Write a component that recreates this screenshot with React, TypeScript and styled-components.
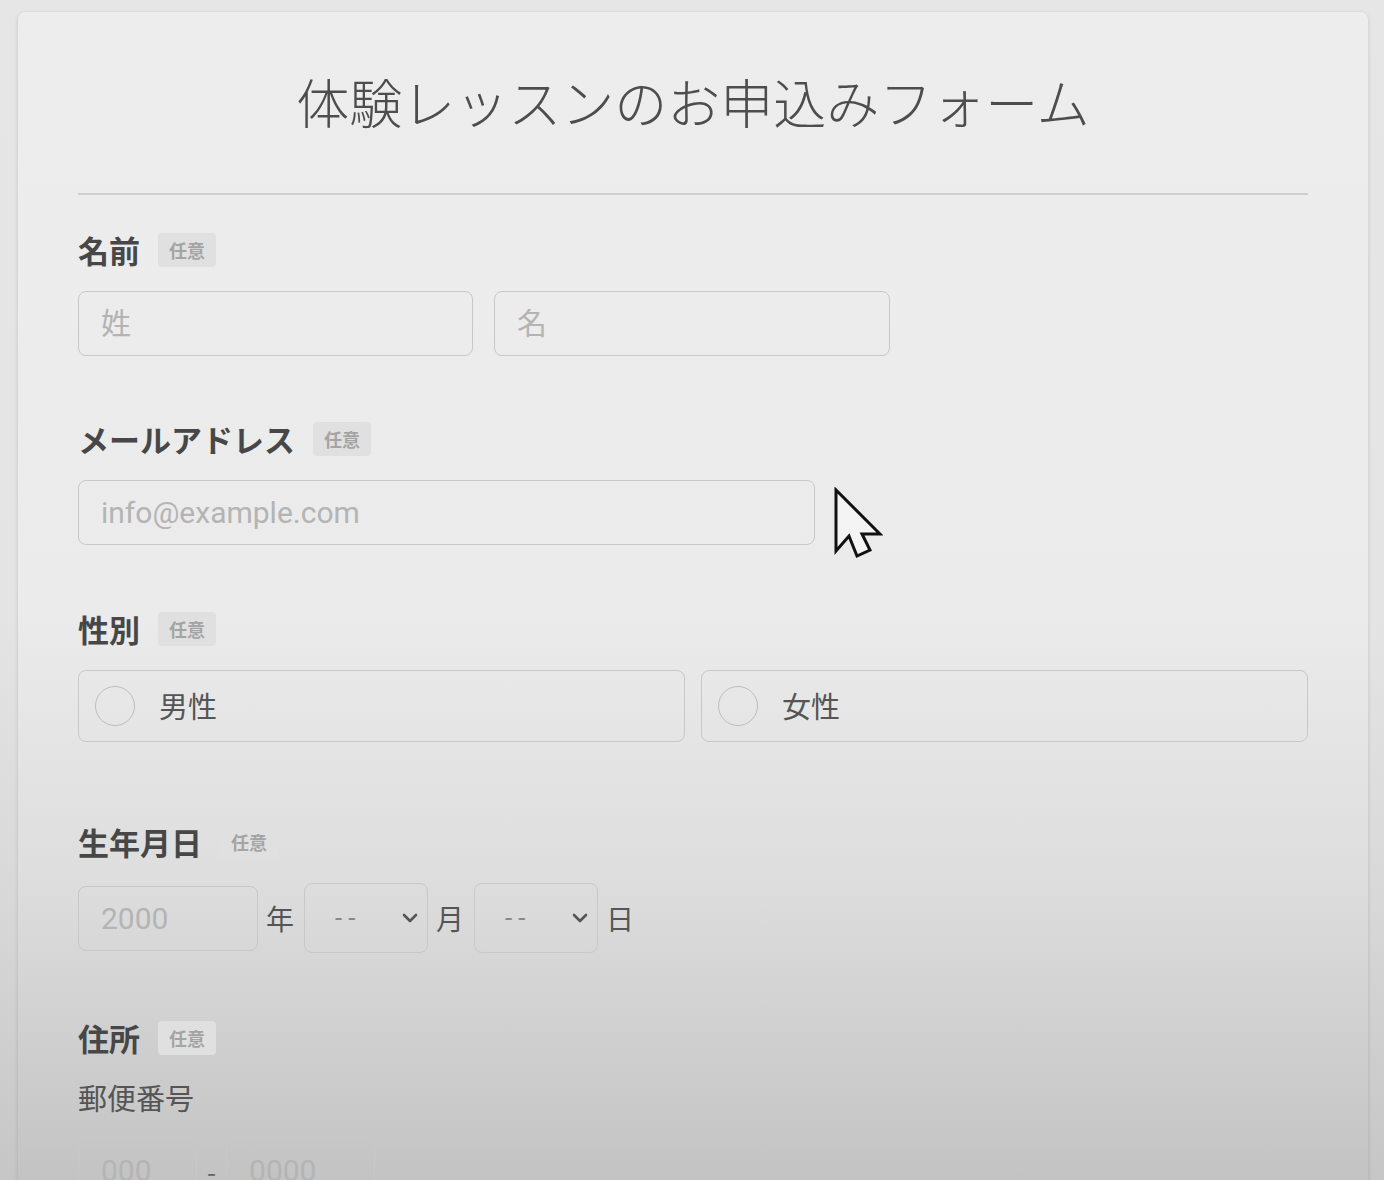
import React from 'react';
import styled, { createGlobalStyle } from 'styled-components';

const GlobalStyle = createGlobalStyle`
  html, body {
    margin: 0;
    padding: 0;
  }
  body {
    font-family: "Noto Sans CJK JP", "Noto Sans", sans-serif;
    color: #444;
    background: #e4e4e4;
  }
`;

const Page = styled.div`
  min-height: 1180px;
  padding: 12px 16px 0 18px;
  background: linear-gradient(
    to bottom,
    #e6e6e6 0px,
    #e4e4e4 620px,
    #d8d8d8 900px,
    #c6c6c6 1180px
  );
  box-sizing: border-box;
  overflow: hidden;
`;

const Card = styled.div`
  border-radius: 8px;
  padding: 53px 60px 80px;
  box-shadow: 0 1px 4px rgba(0, 0, 0, 0.14);
  background: linear-gradient(
    to bottom,
    #ededed 0px,
    #ebebeb 600px,
    #dedede 860px,
    #c3c3c3 1168px
  );
`;

const Title = styled.h1`
  margin: 0;
  text-align: center;
  font-size: 53px;
  line-height: 72px;
  font-weight: 300;
  color: #4d4d4d;
`;

const Divider = styled.hr`
  margin: 56px 0 35px;
  border: none;
  border-top: 2px solid #cfcfcf;
`;

const Section = styled.div<{ $gapAfter?: number }>`
  margin-bottom: ${(p) => p.$gapAfter ?? 64}px;
`;

const LabelRow = styled.div`
  display: flex;
  align-items: center;
  height: 40px;
  margin-bottom: 21px;
`;

const Label = styled.span`
  font-size: 31px;
  line-height: 40px;
  font-weight: 700;
  color: #474747;
`;

const Badge = styled.span`
  margin-left: 18px;
  height: 34px;
  padding: 0 11px;
  display: inline-flex;
  align-items: center;
  border-radius: 4px;
  background: #e0e0e0;
  color: #a4a4a4;
  font-size: 18px;
  font-weight: 700;
`;

const Row = styled.div<{ $gap?: number }>`
  display: flex;
  align-items: center;
  gap: ${(p) => p.$gap ?? 21}px;
`;

const TextInput = styled.input<{ $width: number }>`
  width: ${(p) => p.$width}px;
  height: 65px;
  box-sizing: border-box;
  padding: 0 22px;
  border: 1.5px solid #c8c8c8;
  border-radius: 8px;
  background: transparent;
  font-family: "Roboto", "Noto Sans CJK JP", sans-serif;
  font-size: 30px;
  color: #444;
  outline: none;

  &::placeholder {
    color: #b4b4b4;
  }
`;

const FieldWrap = styled.div`
  position: relative;
  display: inline-block;
`;

const Cursor = styled.svg`
  position: absolute;
  left: calc(100% + 18px);
  top: 7px;
  width: 50px;
  height: 72px;
`;

const RadioGrid = styled.div`
  display: grid;
  grid-template-columns: 1fr 1fr;
  gap: 16px;
`;

const RadioBox = styled.label`
  display: flex;
  align-items: center;
  height: 72px;
  box-sizing: border-box;
  padding-left: 16px;
  border: 1.5px solid #c8c8c8;
  border-radius: 8px;
  cursor: pointer;
`;

const RadioCircle = styled.span`
  width: 40px;
  height: 40px;
  box-sizing: border-box;
  border-radius: 50%;
  border: 1.5px solid #bdbdbd;
  margin-right: 24px;
`;

const RadioText = styled.span`
  font-size: 29px;
  line-height: 40px;
  color: #555;
  margin-top: -3px;
`;

const Unit = styled.span`
  font-size: 28px;
  color: #555;
  margin: 0 2px 0 0;
`;

const SelectWrap = styled.div`
  position: relative;
  width: 124px;
  height: 70px;
`;

const Select = styled.select`
  width: 100%;
  height: 100%;
  appearance: none;
  -webkit-appearance: none;
  box-sizing: border-box;
  padding: 0 0 0 30px;
  border: 1.5px solid #c8c8c8;
  border-radius: 8px;
  background: transparent;
  font-family: "Roboto", sans-serif;
  font-size: 26px;
  letter-spacing: 6px;
  color: #888;
  outline: none;
`;

const Chevron = styled.svg`
  position: absolute;
  right: 8px;
  top: 25px;
  width: 20px;
  height: 20px;
  pointer-events: none;
`;

const SubLabel = styled.div`
  font-size: 29px;
  line-height: 40px;
  color: #555;
  margin: -2px 0 21px;
`;

const Dash = styled.span`
  font-size: 26px;
  color: #666;
`;

const DateSelect: React.FC = () => (
  <SelectWrap>
    <Select defaultValue="">
      <option value="">--</option>
    </Select>
    <Chevron viewBox="0 0 20 20">
      <path d="M4 7 L10 13 L16 7" fill="none" stroke="#555" strokeWidth="2.6" strokeLinecap="round" strokeLinejoin="round" />
    </Chevron>
  </SelectWrap>
);

const Optional: React.FC = () => <Badge>任意</Badge>;

export default function App() {
  return (
    <>
      <GlobalStyle />
      <Page>
        <Card>
          <Title>体験レッスンのお申込みフォーム</Title>
          <Divider />

          <Section $gapAfter={63}>
            <LabelRow>
              <Label>名前</Label>
              <Optional />
            </LabelRow>
            <Row>
              <TextInput $width={395} placeholder="姓" />
              <TextInput $width={396} placeholder="名" />
            </Row>
          </Section>

          <Section $gapAfter={64}>
            <LabelRow>
              <Label>メールアドレス</Label>
              <Optional />
            </LabelRow>
            <FieldWrap>
              <TextInput $width={737} placeholder="info@example.com" />
              <Cursor viewBox="0 0 50 72">
                <path
                  d="M3 3 L3 64 L16 49 L24 69 L37 63 L29 47 L47 47 Z"
                  fill="#f4f4f4"
                  stroke="#111"
                  strokeWidth="3"
                  strokeLinejoin="miter"
                />
              </Cursor>
            </FieldWrap>
          </Section>

          <Section $gapAfter={80}>
            <LabelRow>
              <Label>性別</Label>
              <Optional />
            </LabelRow>
            <RadioGrid>
              <RadioBox>
                <RadioCircle />
                <RadioText>男性</RadioText>
              </RadioBox>
              <RadioBox>
                <RadioCircle />
                <RadioText>女性</RadioText>
              </RadioBox>
            </RadioGrid>
          </Section>

          <Section $gapAfter={65}>
            <LabelRow>
              <Label>生年月日</Label>
              <Optional />
            </LabelRow>
            <Row $gap={8}>
              <TextInput $width={180} placeholder="2000" />
              <Unit>年</Unit>
              <DateSelect />
              <Unit>月</Unit>
              <DateSelect />
              <Unit>日</Unit>
            </Row>
          </Section>

          <Section>
            <LabelRow>
              <Label>住所</Label>
              <Optional />
            </LabelRow>
            <SubLabel>郵便番号</SubLabel>
            <Row $gap={10}>
              <TextInput $width={119} placeholder="000" />
              <Dash>-</Dash>
              <TextInput $width={149} placeholder="0000" />
            </Row>
          </Section>
        </Card>
      </Page>
    </>
  );
}
